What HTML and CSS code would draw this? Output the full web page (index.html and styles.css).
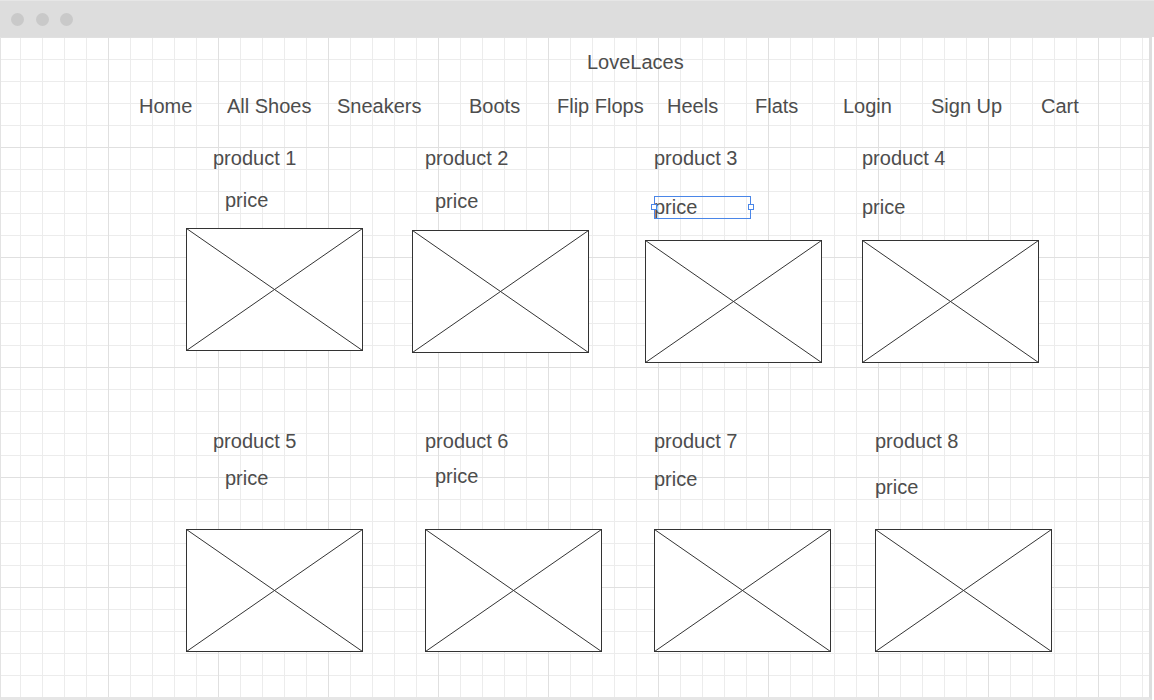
FILE: index.html
```html
<!DOCTYPE html>
<html lang="en">
<head>
<meta charset="utf-8">
<title>LoveLaces wireframe</title>
<link rel="stylesheet" href="styles.css">
</head>
<body>
<div class="window">
  <div class="titlebar">
    <span class="dot"></span><span class="dot"></span><span class="dot"></span>
  </div>
  <div class="canvas">
    <div class="label brand">LoveLaces</div>

    <nav class="nav">
      <a class="label n-home">Home</a>
      <a class="label n-all">All Shoes</a>
      <a class="label n-sneakers">Sneakers</a>
      <a class="label n-boots">Boots</a>
      <a class="label n-flip">Flip Flops</a>
      <a class="label n-heels">Heels</a>
      <a class="label n-flats">Flats</a>
      <a class="label n-login">Login</a>
      <a class="label n-signup">Sign Up</a>
      <a class="label n-cart">Cart</a>
    </nav>

    <div class="label t1">product 1</div>
    <div class="label r1">price</div>
    <svg class="ph b1" viewBox="0 0 177 123"><rect x=".5" y=".5" width="176" height="122"/><line x1=".5" y1=".5" x2="176.5" y2="122.5"/><line x1="176.5" y1=".5" x2=".5" y2="122.5"/></svg>

    <div class="label t2">product 2</div>
    <div class="label r2">price</div>
    <svg class="ph b2" viewBox="0 0 177 123"><rect x=".5" y=".5" width="176" height="122"/><line x1=".5" y1=".5" x2="176.5" y2="122.5"/><line x1="176.5" y1=".5" x2=".5" y2="122.5"/></svg>

    <div class="label t3">product 3</div>
    <div class="label r3">price</div>
    <div class="selection"><span class="handle h-left"></span><span class="handle h-right"></span></div>
    <svg class="ph b3" viewBox="0 0 177 123"><rect x=".5" y=".5" width="176" height="122"/><line x1=".5" y1=".5" x2="176.5" y2="122.5"/><line x1="176.5" y1=".5" x2=".5" y2="122.5"/></svg>

    <div class="label t4">product 4</div>
    <div class="label r4">price</div>
    <svg class="ph b4" viewBox="0 0 177 123"><rect x=".5" y=".5" width="176" height="122"/><line x1=".5" y1=".5" x2="176.5" y2="122.5"/><line x1="176.5" y1=".5" x2=".5" y2="122.5"/></svg>

    <div class="label t5">product 5</div>
    <div class="label r5">price</div>
    <svg class="ph b5" viewBox="0 0 177 123"><rect x=".5" y=".5" width="176" height="122"/><line x1=".5" y1=".5" x2="176.5" y2="122.5"/><line x1="176.5" y1=".5" x2=".5" y2="122.5"/></svg>

    <div class="label t6">product 6</div>
    <div class="label r6">price</div>
    <svg class="ph b6" viewBox="0 0 177 123"><rect x=".5" y=".5" width="176" height="122"/><line x1=".5" y1=".5" x2="176.5" y2="122.5"/><line x1="176.5" y1=".5" x2=".5" y2="122.5"/></svg>

    <div class="label t7">product 7</div>
    <div class="label r7">price</div>
    <svg class="ph b7" viewBox="0 0 177 123"><rect x=".5" y=".5" width="176" height="122"/><line x1=".5" y1=".5" x2="176.5" y2="122.5"/><line x1="176.5" y1=".5" x2=".5" y2="122.5"/></svg>

    <div class="label t8">product 8</div>
    <div class="label r8">price</div>
    <svg class="ph b8" viewBox="0 0 177 123"><rect x=".5" y=".5" width="176" height="122"/><line x1=".5" y1=".5" x2="176.5" y2="122.5"/><line x1="176.5" y1=".5" x2=".5" y2="122.5"/></svg>
  </div>
</div>
</body>
</html>
```

FILE: styles.css
```css
* { box-sizing: border-box; }

html, body {
  margin: 0;
  padding: 0;
  background: #ffffff;
}

body {
  font-family: "Liberation Sans", Arial, sans-serif;
  color: #4d4d4d;
}

.window {
  position: relative;
  width: 1154px;
  height: 700px;
  overflow: hidden;
}

.titlebar {
  height: 37px;
  background: #dddddd;
  border-top: 1px solid #e6e6e6;
  display: flex;
  align-items: center;
  gap: 11.5px;
  padding-left: 11px;
}

.dot {
  width: 13px;
  height: 13px;
  border-radius: 50%;
  background: #c9c9c9;
}

.canvas {
  width: 1152px;
  height: 663px;
  border-left: 1px solid #e3e3e3;
  border-right: 3px solid #dedede;
  border-bottom: 3px solid #e6e6e6;
  background-color: #ffffff;
  background-image:
    linear-gradient(to right, #e0e0e0 1px, transparent 1px),
    linear-gradient(to bottom, #e0e0e0 1px, transparent 1px),
    linear-gradient(to right, #ececec 1px, transparent 1px),
    linear-gradient(to bottom, #ececec 1px, transparent 1px);
  background-size: 110px 110px, 110px 110px, 22px 22px, 22px 22px;
  background-position: -3px 0, -3px 0, -3px 0, -3px 0;
}

.nav { display: contents; }

.label {
  position: absolute;
  font-size: 20px;
  line-height: 23px;
  white-space: nowrap;
  color: #4d4d4d;
  text-decoration: none;
}

.brand { left: 587px; top: 50.5px; }

.n-home { left: 139px; top: 94.5px; }
.n-all { left: 227px; top: 94.5px; }
.n-sneakers { left: 337px; top: 94.5px; }
.n-boots { left: 469px; top: 94.5px; }
.n-flip { left: 557px; top: 94.5px; }
.n-heels { left: 667px; top: 94.5px; }
.n-flats { left: 755px; top: 94.5px; }
.n-login { left: 843px; top: 94.5px; }
.n-signup { left: 931px; top: 94.5px; }
.n-cart { left: 1041px; top: 94.5px; }

/* product titles */
.t1 { left: 213px; top: 146.5px; }
.t2 { left: 425px; top: 146.5px; }
.t3 { left: 654px; top: 146.5px; }
.t4 { left: 862px; top: 146.5px; }
.t5 { left: 213px; top: 429.5px; }
.t6 { left: 425px; top: 429.5px; }
.t7 { left: 654px; top: 429.5px; }
.t8 { left: 875px; top: 429.5px; }

/* prices */
.r1 { left: 225px; top: 188.5px; }
.r2 { left: 435px; top: 189.5px; }
.r3 { left: 654px; top: 195.5px; }
.r4 { left: 862px; top: 195.5px; }
.r5 { left: 225px; top: 466.5px; }
.r6 { left: 435px; top: 464.5px; }
.r7 { left: 654px; top: 467.5px; }
.r8 { left: 875px; top: 475.5px; }

/* image placeholders */
.ph {
  position: absolute;
  width: 177px;
  height: 123px;
  display: block;
}
.ph rect { fill: #ffffff; stroke: #333333; stroke-width: 1; }
.ph line { stroke: #333333; stroke-width: 1; }

.b1 { left: 186px; top: 228px; }
.b2 { left: 412px; top: 230px; }
.b3 { left: 645px; top: 240px; }
.b4 { left: 862px; top: 240px; }
.b5 { left: 186px; top: 529px; }
.b6 { left: 425px; top: 529px; }
.b7 { left: 654px; top: 529px; }
.b8 { left: 875px; top: 529px; }

/* selection outline on product 3 price */
.selection {
  position: absolute;
  left: 654px;
  top: 196px;
  width: 97px;
  height: 23px;
  border: 1px solid #4a86e8;
}
.handle {
  position: absolute;
  top: 7px;
  width: 6px;
  height: 6px;
  background: #ffffff;
  border: 1px solid #4a86e8;
}
.h-left { left: -4px; }
.h-right { right: -4px; }
```
